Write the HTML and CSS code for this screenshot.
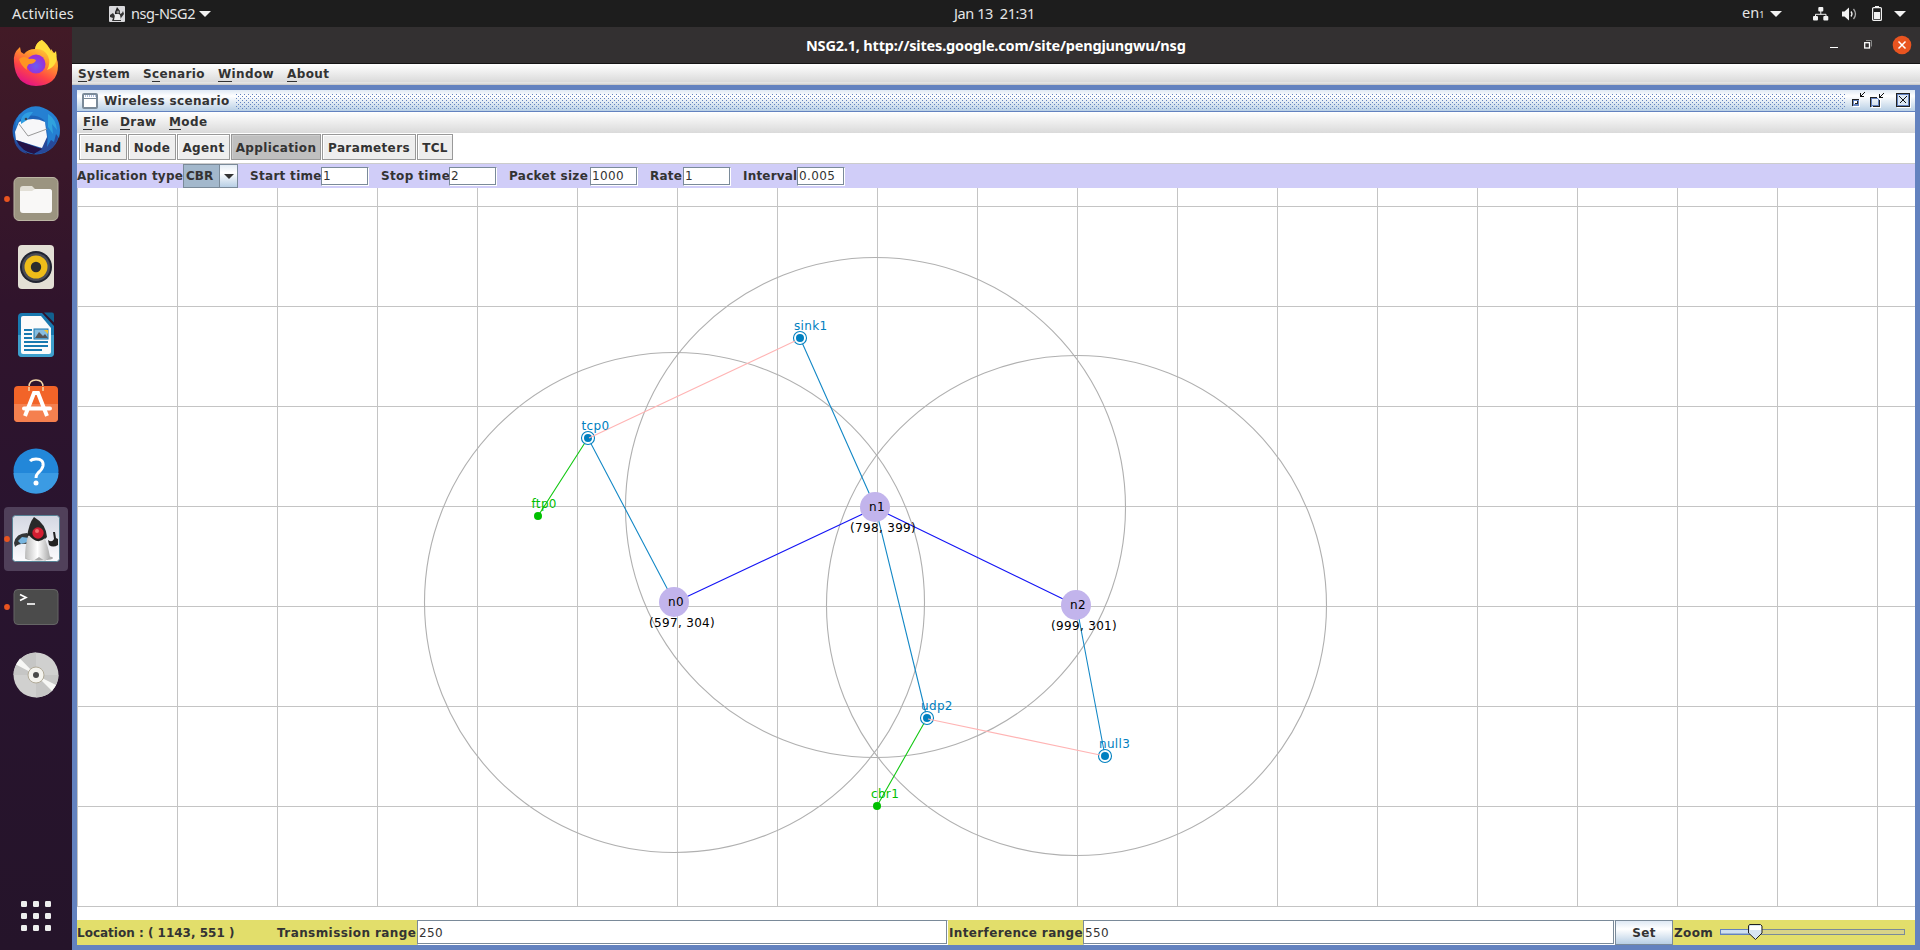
FILE: index.html
```html
<!DOCTYPE html>
<html lang="en">
<head>
<meta charset="utf-8">
<title>NSG2.1</title>
<link rel="stylesheet" href="styles.css">
</head>
<body>
<header class="topbar">
  <span class="activities">Activities</span>
  <svg class="app-icon" width="16" height="16" viewBox="0 0 16 16"><rect width="16" height="16" rx="1" fill="#d9d9dc"/><path d="M1 9l3-2 2 3 3-1 4-2 1-2 1 3-3 4 0 3H3l1-3-3-1z" fill="#333"/><path d="M6 6l2-5 3 4 0 3H6z" fill="#222"/><path d="M6 9q3-2 5 0l1 5H5z" fill="#eee"/><circle cx="9" cy="6" r="1.6" fill="#888"/></svg>
  <span class="app-name">nsg-NSG2</span>
  <svg class="caret" width="12" height="6" viewBox="0 0 12 6"><path d="M0 0h12L6 6z" fill="#f2f2f2"/></svg>
  <span class="clock">Jan 13&nbsp; 21:31</span>
  <span class="lang">en<small>1</small></span>
  <svg class="caret caret-lang" width="12" height="6" viewBox="0 0 12 6"><path d="M0 0h12L6 6z" fill="#f2f2f2"/></svg>
  <svg class="net" width="16" height="14" viewBox="0 0 16 14" fill="#f2f2f2"><rect x="5.300" width="5" height="4.500" rx="1"/><rect y="9" width="5" height="4.500" rx="1"/><rect x="10.300" y="9" width="5" height="4.500" rx="1"/><path d="M7.800 4v3.300M2.500 10V7.300h10.500V10" fill="none" stroke="#f2f2f2"/></svg>
  <svg class="vol" width="16" height="14" viewBox="0 0 16 14"><path d="M0 4.500h2.500L7 .5v13L2.500 9.500H0z" fill="#f2f2f2"/><path d="M9 4.500q2 2.500 0 5" fill="none" stroke="#f2f2f2" stroke-width="1.300"/><path d="M11.500 2q4 5 0 10" fill="none" stroke="#aaa" stroke-width="1.300"/></svg>
  <svg class="bat" width="10" height="15" viewBox="0 0 10 15"><rect x="3" width="4" height="2" fill="#f2f2f2"/><rect x=".6" y="1.600" width="8.800" height="12.800" rx="1" fill="none" stroke="#f2f2f2" stroke-width="1.200"/><rect x="2" y="6" width="6" height="7" fill="#f2f2f2"/></svg>
  <svg class="caret" width="12" height="6" viewBox="0 0 12 6"><path d="M0 0h12L6 6z" fill="#f2f2f2"/></svg>
</header>
<div class="desktop">
<nav class="dock">
  <svg class="dock-item" viewBox="0 0 64 64">
    <defs>
      <linearGradient id="fx" x1=".8" y1="0" x2=".3" y2="1"><stop offset="0" stop-color="#fff04a"/><stop offset=".4" stop-color="#ff9a2c"/><stop offset=".7" stop-color="#ff4545"/><stop offset="1" stop-color="#e0108a"/></linearGradient>
      <radialGradient id="fxp" cx=".5" cy=".6"><stop offset="0" stop-color="#6a5cf0"/><stop offset="1" stop-color="#9a2fd8"/></radialGradient>
    </defs>
    <path d="M10 31q-1-9 5-14l1-1 1 5 3 2q4-5 11-5 1-7 7-9 1 7 6 9l2 4 1-4q7 8 7 17 0 19-22 20Q11 54 10 31z" fill="url(#fx)"/>
    <circle cx="32" cy="33" r="9.500" fill="url(#fxp)"/>
    <path d="M15 28q5-4 10 0 4-1 7 1-1 4-7 4-3 3-2 6-6-4-8-11z" fill="#ff9422"/>
    <path d="M31 18q9-1 13 7 3 7-1 14 12-4 9-19-2 3-4 2-4-9-10-13-6 3-7 9z" fill="#ffdf3c"/>
  </svg>
  <svg class="dock-item" viewBox="0 0 64 64">
    <circle cx="32" cy="32" r="23.500" fill="#1e62b8"/>
    <path d="M10 42q4 11 13 13l-7-9zM32 55q16-1 21-14 4-12-1-23l-9 20z" fill="#27499a"/>
    <path d="M15 16q14-16 32-3 12 9 8 26l-3-4-2 8-3-2-4 7q2-17-3-27-9-7-21-3-6 4-7 12-2-7 3-14z" fill="#2580d2"/>
    <path d="M44 15q8 5 9 16l-5-6 1 10-5-7z" fill="#30a2dd"/>
    <path d="M15 23q15-6 26 0l2 15-5 11-26-8-1-8z" fill="#f7f7f9"/>
    <path d="M15 25l9 12 19-7" fill="none" stroke="#999" stroke-width="1"/>
    <path d="M12 41l26 9-8 5Q18 53 12 41z" fill="#251246"/>
    <path d="M17 20q3-8 12-7l-6 8-6 4z" fill="#2f9de1"/><circle cx="22" cy="20" r="1.300" fill="#345"/>
  </svg>
  <svg class="dock-item" viewBox="0 0 64 64"><circle cx="3" cy="32" r="2.900" fill="#e95420"/><rect x="10" y="10.500" width="44" height="43" rx="5" fill="#9b9480" stroke="#bcb6a4"/><path d="M16 22q0-3 3-3h9l3 3h14q3 0 3 3v10H16z" fill="#e2dfd6"/><path d="M16 24h12l3-2h14q3 0 3 3v18q0 3-3 3H19q-3 0-3-3z" fill="#f9f8f7"/></svg>
  <svg class="dock-item" viewBox="0 0 64 64"><rect x="14" y="10" width="36" height="44" rx="4" fill="#e3dfd5"/><circle cx="32" cy="32" r="16" fill="#202330"/><circle cx="32" cy="32" r="14" fill="#4b4d56"/><circle cx="32" cy="32" r="11.500" fill="#eebd19"/><circle cx="32" cy="32" r="5.200" fill="#2d2d2d"/></svg>
  <svg class="dock-item" viewBox="0 0 64 64"><path d="M18 10h20l12 13v27q0 4-4 4H18q-4 0-4-4V14q0-4 4-4z" fill="#1879b0"/><path d="M14 32h36v18q0 4-4 4H18q-4 0-4-4z" fill="#3e9fcc"/><path d="M40 9.500h8q2 0 2 2v8z" fill="#12608f"/><path d="M19 13h18l10 12v24q0 2-2 2H19q-2 0-2-2V15q0-2 2-2z" fill="#fbfbfb"/><path d="M20 27h8M20 31h8M20 35h8M20 39h24M20 43h24M20 47h18" stroke="#1879b0" stroke-width="1.800"/><rect x="30" y="26" width="14" height="10" fill="#87bde0" stroke="#1879b0"/><path d="M31 35l4-6 4 4 2-2 3 4z" fill="#555"/><path d="M40 27h4v4z" fill="#f3c632"/></svg>
  <svg class="dock-item" viewBox="0 0 64 64"><path d="M25 20v-4q0-7 7-7t7 7v4" fill="none" stroke="#f4d7a8" stroke-width="1.500"/><rect x="10" y="15" width="44" height="36" rx="4" fill="#f26428"/><path d="M10 33h44v14q0 4-4 4H14q-4 0-4-4z" fill="#f5804f"/><path d="M25 20v-4M39 20v-4" stroke="#f4d7a8" stroke-width="1.500"/><path d="M21 45l9-23h4l9 23" fill="none" stroke="#fff" stroke-width="4"/><path d="M20 37.500h26" stroke="#fff" stroke-width="4" stroke-linecap="round"/></svg>
  <svg class="dock-item" viewBox="0 0 64 64"><circle cx="32" cy="32" r="22.500" fill="#2287d9"/><path d="M9.500 34h45a22.500 20.500 0 0 1-45 0z" fill="#3b9be3"/><path d="M26 22q2-2 6-2 8 0 7 7-1 4-5 7-2 2-2 5" fill="none" stroke="#fff" stroke-width="3"/><circle cx="32" cy="44" r="2.500" fill="#fff"/></svg>
  <svg class="dock-item dock-active" viewBox="0 0 64 64">
    <defs><linearGradient id="dk" x1="0" y1="0" x2="0" y2="1"><stop offset="0" stop-color="#d4d7e2"/><stop offset="1" stop-color="#fbfbfd"/></linearGradient><linearGradient id="belly"><stop offset="0" stop-color="#bbb"/><stop offset=".5" stop-color="#fff"/><stop offset="1" stop-color="#aaa"/></linearGradient></defs>
    <circle cx="3" cy="32" r="2.900" fill="#e95420"/><rect x="8.500" y="8.500" width="47" height="46" rx="3" fill="url(#dk)" stroke="#568396"/>
    <ellipse cx="35" cy="51" rx="14" ry="2.500" fill="#aaa"/>
    <path d="M10 36q2-10 13-10l4 4-4 7q-8-1-12 3z" fill="#353739"/><path d="M14 34l4-4 7 1-1 4-7 2z" fill="#78b5df"/><path d="M44 33q4 3 6-1l-1-7h2l1 6 2 1v6q-5 3-9 0z" fill="#222"/>
    <path d="M23 30q2-14 7-20 12 7 13 20l-5 5z" fill="#292929"/><path d="M24 29q8-4 16 1 4 8 6 20l-5 4-6-4-6 4-8-3q0-12 3-22z" fill="url(#belly)"/><path d="M24 27q9 12 17 4l-1-5H25z" fill="#222"/><circle cx="34" cy="26" r="5.700" fill="#d31d31"/><circle cx="33" cy="24" r="2" fill="#f17070"/>
  </svg>
  <svg class="dock-item" viewBox="0 0 64 64"><circle cx="3" cy="32" r="2.900" fill="#e95420"/><rect x="10" y="14.500" width="44" height="35" rx="4" fill="#4b4b4b" stroke="#656565"/><path d="M16 19.500l6 3-6 3" fill="none" stroke="#fff" stroke-width="1.700"/><path d="M23 29h8" stroke="#fff" stroke-width="1.600"/></svg>
  <svg class="dock-item" viewBox="0 0 64 64"><circle cx="32" cy="32" r="22.500" fill="#d0d0cf"/><path d="M32 9.500v45A22.500 22.500 0 0 0 54.500 32h-45A22.500 22.500 0 0 1 32 9.500z" fill="#c6c6c5"/><path d="M32 32L12 21.500l4-6zM32 32l20 10-4 6z" fill="#f7f7f5"/><circle cx="32" cy="32" r="8" fill="#f4f3ee" stroke="#b1aa98"/><circle cx="32" cy="32" r="3" fill="#4a4a4a" /></svg>
  <svg class="dock-item dock-apps" viewBox="0 0 64 64" fill="#eee"><rect x="17" y="17" width="6" height="6" rx="1.200"/><rect x="29" y="17" width="6" height="6" rx="1.200"/><rect x="41" y="17" width="6" height="6" rx="1.200"/><rect x="17" y="29" width="6" height="6" rx="1.200"/><rect x="29" y="29" width="6" height="6" rx="1.200"/><rect x="41" y="29" width="6" height="6" rx="1.200"/><rect x="17" y="41" width="6" height="6" rx="1.200"/><rect x="29" y="41" width="6" height="6" rx="1.200"/><rect x="41" y="41" width="6" height="6" rx="1.200"/></svg>
</nav>
<main class="window">
  <div class="titlebar">
    <span class="title">NSG2.1, http://sites.google.com/site/pengjungwu/nsg</span>
    <svg class="controls" width="92" height="20" viewBox="0 0 92 20"><path d="M6 12.500h8" stroke="#fff"/><rect x="40.700" y="7.700" width="4.800" height="5.300" fill="none" stroke="#fff" stroke-width="1.300"/><path d="M42 5.500h5.500v6" fill="none" stroke="#888"/><circle cx="78" cy="10" r="9.300" fill="#e95420"/><path d="M74.500 6.500l7 7M81.500 6.500l-7 7" stroke="#fff" stroke-width="1.500"/></svg>
  </div>
  <div class="menubar">
    <span class="m-system"><u>S</u>ystem</span><span class="m-scenario">S<u>c</u>enario</span><span class="m-window"><u>W</u>indow</span><span><u>A</u>bout</span>
  </div>
  <section class="frame">
    <div class="frame-title">
      <svg width="16" height="16" viewBox="0 0 16 16"><rect x="1" y="1" width="14" height="14" rx="1" fill="#fff" stroke="#7a8a99" stroke-width="2"/><path d="M2 5.500h12" stroke="#7a8a99"/><path d="M3 3h11" stroke="#6382bf" stroke-dasharray="1 1"/></svg>
      <span class="frame-name">Wireless scenario</span>
      <span class="bumps"></span>
      <svg class="frame-controls" width="60" height="16" viewBox="0 0 60 16" shape-rendering="crispEdges"><path d="M1 13.500h6.500V6" fill="none" stroke="#fff"/><rect x="1" y="7" width="5" height="5" fill="#fff" stroke="#6382bf" stroke-width="2"/><path d="M.5 13v-6.500h6.500M3 10.500h2.500v-3" fill="none" stroke="#222"/><path d="M8 0h1v2h1v1h2v1H8zM10 1h1v1h-1zM11 0h1v1h-1zM12 -1h1v1h-1z" fill="#111"/><path d="M19 14.500h9.500V5" fill="none" stroke="#fff"/><path d="M18.500 14V4.500H25M21 13.500h6.500V7" fill="none" stroke="#222"/><path d="M19.500 13.500v-8H26M20 12.500h6.500V6" fill="none" stroke="#6382bf"/><path d="M27 1h1v2h1v1h2v1h-4zM29 2h1v1h-1zM30 1h1v1h-1zM31 0h1v1h-1z" fill="#111"/><path d="M45 14.500h13.500V1" fill="none" stroke="#fff"/><rect x="44.500" y=".5" width="13" height="13" fill="#dce8f5" stroke="#222"/><rect x="45.500" y="1.500" width="11" height="11" fill="none" stroke="#6382bf"/><path d="M47.500 3.500l7 7M54.500 3.500l-7 7" stroke="#111" stroke-width="1.400"/></svg>
    </div>
    <div class="frame-menu"><span class="m-file"><u>F</u>ile</span><span class="m-draw"><u>D</u>raw</span><span><u>M</u>ode</span></div>
    <div class="tabs">
      <button class="tab t-hand">Hand</button><button class="tab t-node">Node</button><button class="tab t-agent">Agent</button><button class="tab t-app">Application</button><button class="tab t-param">Parameters</button><button class="tab t-tcl">TCL</button>
    </div>
    <div class="options">
      <span class="l-type">Aplication type</span><span class="combo"><b>CBR</b><i><svg width="10" height="5" viewBox="0 0 10 5"><path d="M0 0h10L5 5z" fill="#333"/></svg></i></span>
      <span class="l-start">Start time</span><span class="field">1</span>
      <span class="l-stop">Stop time</span><span class="field">2</span>
      <span class="l-packet">Packet size</span><span class="field">1000</span>
      <span class="l-rate">Rate</span><span class="field">1</span>
      <span class="l-interval">Interval</span><span class="field">0.005</span>
    </div>
    <svg class="scene" width="1838" height="732" viewBox="77 188 1838 732">
      <defs><pattern id="grid" x="77" y="106" width="100" height="100" patternUnits="userSpaceOnUse"><path d="M.5 0v100M0 .5h100" stroke="#c4c4c4"/></pattern></defs>
      <rect x="77" y="188" width="1838" height="719" fill="url(#grid)"/>
      <g class="ranges"><circle cx="674.500" cy="602.500" r="250"/><circle cx="875.500" cy="507.500" r="250"/><circle cx="1076.500" cy="605.500" r="250"/></g>
      <g class="wireless"><path d="M674.500 602.500L875.500 508L1076.500 605.500"/></g>
      <g class="attach"><path d="M588 438L674.500 602.500M800 338L875.500 507.500L927 718M1076.500 605.500L1105 756"/></g>
      <g class="application"><path d="M588 438L538 516M927 718L877 806"/></g>
      <g class="nodes"><circle cx="674" cy="602" r="15"/><circle cx="875" cy="507" r="15"/><circle cx="1076" cy="605" r="15"/></g>
      <g class="rings"><circle cx="588" cy="438" r="6.500"/><circle cx="800" cy="338" r="6.500"/><circle cx="927" cy="718" r="6.500"/><circle cx="1105" cy="756" r="6.500"/></g>
      <g class="agents"><circle cx="588" cy="438" r="4"/><circle cx="800" cy="338" r="4"/><circle cx="927" cy="718" r="4"/><circle cx="1105" cy="756" r="4"/></g>
      <g class="apps"><circle cx="538" cy="516" r="4"/><circle cx="877" cy="806" r="4"/></g>
      <g class="link"><path d="M589 438L795 341M928 719L1100 755"/></g>
      <g class="node-text"><text x="668" y="606">n0</text><text x="869" y="511">n1</text><text x="1070" y="609">n2</text><text x="649" y="627">(597, 304)</text><text x="850" y="532">(798, 399)</text><text x="1051" y="630">(999, 301)</text></g>
      <g class="agent-text"><text x="581.500" y="430">tcp0</text><text x="794" y="330">sink1</text><text x="921" y="710">udp2</text><text x="1099" y="748">null3</text></g>
      <g class="app-text"><text x="531.500" y="508">ftp0</text><text x="871" y="798">cbr1</text></g>
    </svg>
    <footer class="status">
      <span class="l-location">Location : ( 1143, 551 )</span><span class="l-trans">Transmission range</span><span class="wide">250</span><span class="l-interf">Interference range</span><span class="wide wide-2">550</span><button class="set">Set</button><span class="l-zoom">Zoom</span>
      <svg class="slider" width="186" height="20" viewBox="0 0 186 20"><rect x=".5" y="6.500" width="184" height="5" fill="#d8d388" stroke="#7a8a99"/><rect x=".5" y="6.500" width="34" height="5" fill="#cfe0f0" stroke="#6382bf"/><path d="M1 10.500h33" stroke="#9fb7d2"/><path d="M29.500 1.500h11l1.500 1.500v7l-6.500 6.500L28.500 10V3z" fill="#d7e5f2" stroke="#222"/><path d="M30 3h11v4H30z" fill="#fff"/></svg>
    </footer>
  </section>
</main>
</div>
</body>
</html>
```

FILE: styles.css
```css
* { box-sizing: border-box; }
body { margin: 0; width: 1920px; height: 950px; overflow: hidden; display: flex; flex-direction: column; background: #333031; font: bold 12px/16px "DejaVu Sans", sans-serif; color: #333; letter-spacing: .37px; white-space: nowrap; }
svg { display: block; flex: none; }
span { flex: none; }
u { text-decoration: none; border-bottom: 1px solid #333; display: inline-block; line-height: 13px; }

.topbar { height: 27px; flex: none; display: flex; align-items: center; background: #1d1d1d; color: #e6e6e6; font: 14.5px/27px "Noto Sans", "Open Sans", sans-serif; letter-spacing: -.25px; }
.activities { width: 97px; padding-left: 12px; letter-spacing: .15px; }
.app-icon { margin-right: 6px; }
.topbar .app-icon { margin-left: 12px; }
.app-name { width: 68px; letter-spacing: -.4px; }
.clock { margin-left: 743px; width: 788px; letter-spacing: -.4px; }
.lang { width: 28px; letter-spacing: 0; }
.lang small { font-size: 9px; }
.caret-lang { margin-right: 31px; }
.net { margin-right: 13px; }
.vol { margin-right: 14px; }
.bat { margin-right: 12px; }

.desktop { display: flex; height: 923px; }
.dock { width: 72px; flex: none; display: flex; flex-direction: column; gap: 4px; padding: 4px 4px 2px; background: linear-gradient(#421a26, #30142c 30%, #29142f 55%, #25142a); }
.dock-item { width: 64px; height: 64px; }
.dock-active { background: #50405a; border-radius: 4px; }
.dock-apps { margin-top: auto; }

.window { width: 1848px; display: flex; flex-direction: column; }
.titlebar { height: 37px; flex: none; display: flex; align-items: center; background: #333031; border-bottom: 1px solid #151515; padding-bottom: 1px; }
.title { margin-left: 734px; width: 1016px; color: #fff; font: bold 14.5px/20px "Noto Sans", sans-serif; letter-spacing: -.19px; }
.controls { margin-left: 2px; }
.menubar { height: 21px; flex: none; display: flex; padding: 2px 6px 0; background: linear-gradient(#fff, #dadada 18px, #eee 19px, #ccc 20px); }
.m-system { width: 65px; }
.m-scenario { width: 75px; }
.m-window { width: 69px; }

.frame { height: 865px; border: 5px solid #6382bf; background: #fff; display: flex; flex-direction: column; }
.frame-title { height: 22px; flex: none; display: flex; padding: 3px 0 0 5px; border-bottom: 1px solid #6382bf; background: linear-gradient(#dfe9f4, #fff 6px, #b8cfe5); }
.frame-name { margin-left: 6px; width: 132px; }
.bumps { width: 1609px; height: 15px; margin: 1px 7px 0 0; background: radial-gradient(circle at .5px .5px, #6382bf .6px, transparent .7px) 0 0 / 4px 4px, radial-gradient(circle at .5px .5px, #6382bf .6px, transparent .7px) 2px 2px / 4px 4px; }
.frame-controls { overflow: visible; }
.frame-menu { height: 21px; flex: none; display: flex; padding: 2px 6px; background: linear-gradient(#fff, #dadada); }
.m-file { width: 37px; }
.m-draw { width: 49px; }
.tabs { height: 30px; flex: none; display: flex; gap: 1px; padding: 1px 2px 0; }
.tab { height: 26px; padding: 1px 0 0; border: 1px solid #999; box-shadow: inset 1px 1px #fff; background: #eee; font: inherit; letter-spacing: inherit; color: #333; }
.t-hand, .t-node { width: 48px; }
.t-agent { width: 53px; }
.t-app { width: 90px; background: #bfbfbf; box-shadow: inset 1px 1px #ccc; }
.t-param { width: 94px; }
.t-tcl { width: 36px; }
.options { height: 25px; flex: none; display: flex; align-items: center; background: #d0cdf8; border-top: 1px solid #ccc; }
.l-type { width: 106px; letter-spacing: .25px; }
.combo { width: 55px; height: 24px; display: flex; border: 1px solid #7a8a99; background: #a3b8cc; margin-right: 12px; }
.combo b { width: 35px; padding: 3px 2px; letter-spacing: 0; }
.combo i { flex: 1; display: flex; align-items: center; justify-content: center; border-left: 1px solid #7a8a99; background: linear-gradient(#e4edf6, #fff 35%, #b8cfe5); }
.field { width: 48px; height: 19px; margin-right: 12px; padding-left: 1px; border: 1px solid #7a8a99; border-right-color: #fff; border-bottom-color: #fff; box-shadow: inset -1px -1px #7a8a99; background: #fff; font-weight: normal; line-height: 17px; }
.l-start { width: 71px; letter-spacing: .3px; }
.l-stop { width: 68px; }
.l-packet { width: 81px; letter-spacing: .3px; }
.l-rate { width: 33px; letter-spacing: .25px; }
.l-interval { width: 54px; letter-spacing: .2px; }

.scene { width: 1838px; height: 732px; font: 12px "DejaVu Sans", sans-serif; letter-spacing: .33px; }
.ranges { fill: none; stroke: #b0b0b0; stroke-width: 1.1; }
.wireless { fill: none; stroke: #1414f5; stroke-width: 1.1; }
.attach { fill: none; stroke: #1488c6; stroke-width: 1.1; }
.application { fill: none; stroke: #14c814; stroke-width: 1.1; }
.link { stroke: #ffb4b4; stroke-width: 1.1; }
.nodes { fill: #c2b4ec; }
.rings { fill: #fff; fill-opacity: .85; stroke: #0080c0; stroke-width: 1.1; }
.agents, .agent-text { fill: #0080c0; }
.apps, .app-text { fill: #00c000; }
.node-text { fill: #000; }

.status { height: 25px; flex: none; display: flex; align-items: center; background: #e2de6b; }
.l-location { width: 200px; letter-spacing: 0; }
.l-trans { width: 140px; letter-spacing: .42px; }
.wide { width: 531px; height: 25px; padding: 4px 1px; border: 1px solid #7a8a99; box-shadow: inset -1px -1px #7a8a99; border-right-color: #fff; border-bottom-color: #fff; background: #fff; font-weight: normal; }
.l-interf { width: 135px; padding-left: 1px; letter-spacing: .36px; }
.wide-2 { width: 532px; }
.set { width: 58px; height: 25px; padding: 0; border: 1px solid #7a8a99; background: linear-gradient(#dfe9f4, #fff 35%, #b8cfe5); font: inherit; letter-spacing: inherit; color: inherit; }
.l-zoom { width: 47px; padding-left: 1px; }
.slider { margin-top: 0; }
```
